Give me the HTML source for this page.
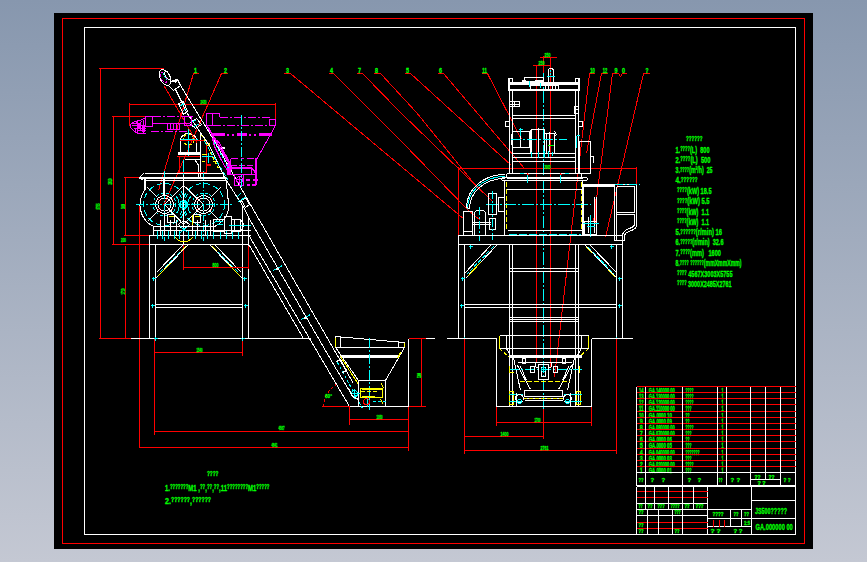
<!DOCTYPE html>
<html><head><meta charset="utf-8"><title>JS500 CAD drawing</title>
<style>
html,body{margin:0;padding:0;}
body{width:867px;height:562px;overflow:hidden;background:linear-gradient(to bottom,#8797ae 0%,#c4c8d3 100%);font-family:"Liberation Sans",sans-serif;}
#sheet{position:absolute;left:54px;top:13px;width:759px;height:536px;background:#000;}
svg{position:absolute;left:0;top:0;}
svg text{font-family:"Liberation Sans",sans-serif;font-weight:bold;stroke:#00ff00;stroke-width:0.3px;}
</style></head><body>
<div id="sheet"></div>
<svg width="867" height="562" viewBox="0 0 867 562" shape-rendering="crispEdges">
<g transform="translate(0.5,0.5)" stroke-linecap="butt">
<rect x="62" y="18" width="742" height="525" stroke="#ff0000" fill="none"/>
<rect x="84" y="27" width="711" height="507" stroke="#ffffff" fill="none"/>
<line x1="98" y1="68" x2="163" y2="68" stroke="#ff0000"/>
<line x1="100" y1="68" x2="100" y2="338" stroke="#ff0000"/>
<line x1="98" y1="338" x2="130" y2="338" stroke="#ff0000"/>
<line x1="111" y1="116" x2="145" y2="116" stroke="#ff0000"/>
<line x1="113" y1="116" x2="113" y2="244" stroke="#ff0000"/>
<line x1="111" y1="244" x2="149" y2="244" stroke="#ff0000"/>
<line x1="123" y1="177" x2="141" y2="177" stroke="#ff0000"/>
<line x1="125" y1="177" x2="125" y2="235" stroke="#ff0000"/>
<line x1="125" y1="245" x2="125" y2="338" stroke="#ff0000"/>
<line x1="123" y1="235" x2="149" y2="235" stroke="#ff0000"/>
<line x1="139" y1="204" x2="139" y2="447" stroke="#ff0000"/>
<line x1="129" y1="104" x2="275" y2="104" stroke="#ff0000"/>
<line x1="129" y1="102" x2="129" y2="125" stroke="#ff0000"/>
<line x1="275" y1="102" x2="275" y2="119" stroke="#ff0000"/>
<line x1="154" y1="338" x2="154" y2="434" stroke="#ff0000"/>
<line x1="242" y1="338" x2="242" y2="355" stroke="#ff0000"/>
<line x1="154" y1="352" x2="242" y2="352" stroke="#ff0000"/>
<line x1="154" y1="431" x2="408" y2="431" stroke="#ff0000"/>
<line x1="139" y1="447" x2="408" y2="447" stroke="#ff0000"/>
<line x1="408" y1="406" x2="408" y2="450" stroke="#ff0000"/>
<line x1="183" y1="238" x2="183" y2="269" stroke="#ff0000"/>
<line x1="183" y1="267" x2="248" y2="267" stroke="#ff0000"/>
<line x1="248" y1="245" x2="248" y2="269" stroke="#ff0000"/>
<line x1="193" y1="73" x2="198" y2="73" stroke="#ff0000"/>
<line x1="193" y1="73" x2="158" y2="190" stroke="#ff0000"/>
<line x1="221" y1="73" x2="227" y2="73" stroke="#ff0000"/>
<line x1="221" y1="73" x2="163" y2="205" stroke="#ff0000"/>
<line x1="130" y1="338" x2="310" y2="338" stroke="#ffffff"/>
<rect x="149" y="235" width="99" height="9" stroke="#ffffff" fill="none"/>
<line x1="149" y1="244" x2="149" y2="338" stroke="#ffffff"/>
<line x1="155" y1="244" x2="155" y2="338" stroke="#ffffff"/>
<line x1="242" y1="244" x2="242" y2="338" stroke="#ffffff"/>
<line x1="248" y1="244" x2="248" y2="338" stroke="#ffffff"/>
<line x1="155" y1="304" x2="242" y2="304" stroke="#ffffff"/>
<line x1="155" y1="307" x2="242" y2="307" stroke="#ffffff"/>
<line x1="182" y1="245" x2="156" y2="272" stroke="#ffffff"/>
<line x1="187" y1="245" x2="155" y2="278" stroke="#ffffff"/>
<line x1="184" y1="247" x2="158" y2="273" stroke="#00ffff" stroke-dasharray="4 2"/>
<line x1="170" y1="263" x2="157" y2="276" stroke="#ffff00"/>
<line x1="185" y1="246" x2="180" y2="251" stroke="#ffff00"/>
<line x1="210" y1="245" x2="242" y2="278" stroke="#ffffff"/>
<line x1="215" y1="245" x2="241" y2="272" stroke="#ffffff"/>
<line x1="213" y1="247" x2="239" y2="273" stroke="#00ffff" stroke-dasharray="4 2"/>
<line x1="227" y1="263" x2="240" y2="276" stroke="#ffff00"/>
<line x1="212" y1="246" x2="217" y2="251" stroke="#ffff00"/>
<line x1="151" y1="278" x2="155" y2="278" stroke="#00ffff"/>
<line x1="153" y1="276" x2="153" y2="280" stroke="#00ffff"/>
<line x1="242" y1="278" x2="246" y2="278" stroke="#00ffff"/>
<line x1="244" y1="276" x2="244" y2="280" stroke="#00ffff"/>
<line x1="150" y1="305" x2="154" y2="305" stroke="#00ffff"/>
<line x1="152" y1="303" x2="152" y2="307" stroke="#00ffff"/>
<line x1="243" y1="305" x2="247" y2="305" stroke="#00ffff"/>
<line x1="245" y1="303" x2="245" y2="307" stroke="#00ffff"/>
<line x1="153" y1="338" x2="157" y2="338" stroke="#00ffff"/>
<line x1="155" y1="336" x2="155" y2="340" stroke="#00ffff"/>
<line x1="240" y1="338" x2="244" y2="338" stroke="#00ffff"/>
<line x1="242" y1="336" x2="242" y2="340" stroke="#00ffff"/>
<line x1="144" y1="173" x2="224" y2="173" stroke="#ffffff"/>
<rect x="138.5" y="176.5" width="88" height="2" fill="#ffffff"/>
<line x1="144" y1="180" x2="226" y2="180" stroke="#ffffff"/>
<polyline points="143,173 139,177 143,180" stroke="#ffffff" fill="none"/>
<rect x="143.5" y="177.5" width="2" height="12" fill="#ffffff"/>
<path d="M144,189 L141,196 A24,24 0 0 0 153,226 L153,235" stroke="#ffffff" fill="none"/>
<path d="M226,180 L227,196 A24,24 0 0 1 214,226" stroke="#ffffff" fill="none"/>
<path d="M183,185 L164,204 M183,185 L203,204 M183,224 L164,204 M183,224 L203,204" stroke="#ffffff" fill="none"/>
<circle cx="164" cy="204" r="21" stroke="#00ffff" fill="none" stroke-dasharray="6 3"/>
<circle cx="164" cy="204" r="11.5" stroke="#00ffff" fill="none" stroke-dasharray="3 2"/>
<circle cx="164" cy="204" r="9" stroke="#ffffff" fill="none"/>
<circle cx="164" cy="204" r="6.5" stroke="#ffffff" fill="none"/>
<line x1="157" y1="197" x2="147" y2="187" stroke="#ffffff"/>
<line x1="171" y1="197" x2="181" y2="187" stroke="#ffffff"/>
<line x1="157" y1="211" x2="147" y2="221" stroke="#ffffff"/>
<line x1="171" y1="211" x2="181" y2="221" stroke="#ffffff"/>
<line x1="164" y1="170" x2="164" y2="240" stroke="#00ffff" stroke-dasharray="6 2 1 2"/>
<line x1="171" y1="209" x2="172" y2="209" stroke="#ff0000"/>
<line x1="157" y1="209" x2="158" y2="209" stroke="#ff0000"/>
<line x1="157" y1="199" x2="158" y2="199" stroke="#ff0000"/>
<line x1="171" y1="199" x2="172" y2="199" stroke="#ff0000"/>
<circle cx="203" cy="204" r="21" stroke="#00ffff" fill="none" stroke-dasharray="6 3"/>
<circle cx="203" cy="204" r="11.5" stroke="#00ffff" fill="none" stroke-dasharray="3 2"/>
<circle cx="203" cy="204" r="9" stroke="#ffffff" fill="none"/>
<circle cx="203" cy="204" r="6.5" stroke="#ffffff" fill="none"/>
<line x1="196" y1="197" x2="186" y2="187" stroke="#ffffff"/>
<line x1="210" y1="197" x2="220" y2="187" stroke="#ffffff"/>
<line x1="196" y1="211" x2="186" y2="221" stroke="#ffffff"/>
<line x1="210" y1="211" x2="220" y2="221" stroke="#ffffff"/>
<line x1="203" y1="170" x2="203" y2="240" stroke="#00ffff" stroke-dasharray="6 2 1 2"/>
<line x1="210" y1="209" x2="211" y2="209" stroke="#ff0000"/>
<line x1="196" y1="209" x2="197" y2="209" stroke="#ff0000"/>
<line x1="196" y1="199" x2="197" y2="199" stroke="#ff0000"/>
<line x1="210" y1="199" x2="211" y2="199" stroke="#ff0000"/>
<rect x="162.5" y="178.5" width="2" height="17" fill="#ffffff"/>
<line x1="164" y1="213" x2="164" y2="226" stroke="#ffffff"/>
<path d="M176,196 A14,14 0 0 1 176,213" stroke="#00ffff" fill="none"/>
<path d="M179,194 A17,17 0 0 1 179,215" stroke="#00ffff" fill="none" stroke-dasharray="4 2"/>
<path d="M190,196 A14,14 0 0 0 190,213" stroke="#00ffff" fill="none"/>
<path d="M187,194 A17,17 0 0 0 187,215" stroke="#00ffff" fill="none" stroke-dasharray="4 2"/>
<line x1="135" y1="204" x2="231" y2="204" stroke="#00ffff" stroke-dasharray="8 2 2 2"/>
<line x1="183" y1="170" x2="183" y2="244" stroke="#ffffff"/>
<rect x="180" y="201" width="6" height="6" stroke="#00ffff" fill="none"/>
<line x1="153" y1="226" x2="214" y2="226" stroke="#ffffff"/>
<line x1="153" y1="230" x2="250" y2="230" stroke="#ffffff"/>
<line x1="150" y1="235" x2="250" y2="235" stroke="#ffffff"/>
<line x1="160" y1="219" x2="160" y2="235" stroke="#ffffff"/>
<line x1="164" y1="219" x2="164" y2="235" stroke="#ffffff"/>
<line x1="170" y1="219" x2="170" y2="235" stroke="#ffffff"/>
<line x1="176" y1="219" x2="176" y2="235" stroke="#ffffff"/>
<line x1="192" y1="219" x2="192" y2="235" stroke="#ffffff"/>
<line x1="197" y1="219" x2="197" y2="235" stroke="#ffffff"/>
<line x1="205" y1="219" x2="205" y2="235" stroke="#ffffff"/>
<line x1="210" y1="219" x2="210" y2="235" stroke="#ffffff"/>
<line x1="157" y1="230" x2="157" y2="238" stroke="#00ffff"/>
<line x1="162" y1="230" x2="162" y2="238" stroke="#00ffff"/>
<line x1="168" y1="230" x2="168" y2="238" stroke="#00ffff"/>
<line x1="174" y1="230" x2="174" y2="238" stroke="#00ffff"/>
<line x1="179" y1="230" x2="179" y2="238" stroke="#00ffff"/>
<line x1="188" y1="230" x2="188" y2="238" stroke="#00ffff"/>
<line x1="195" y1="230" x2="195" y2="238" stroke="#00ffff"/>
<line x1="201" y1="230" x2="201" y2="238" stroke="#00ffff"/>
<line x1="207" y1="230" x2="207" y2="238" stroke="#00ffff"/>
<line x1="213" y1="230" x2="213" y2="238" stroke="#00ffff"/>
<line x1="220" y1="230" x2="220" y2="238" stroke="#00ffff"/>
<line x1="226" y1="230" x2="226" y2="238" stroke="#00ffff"/>
<line x1="232" y1="230" x2="232" y2="238" stroke="#00ffff"/>
<line x1="238" y1="230" x2="238" y2="238" stroke="#00ffff"/>
<rect x="167" y="214" width="7" height="8" stroke="#ffffff" fill="none"/>
<rect x="193" y="214" width="7" height="8" stroke="#ffffff" fill="none"/>
<line x1="168" y1="216" x2="173" y2="216" stroke="#ffff00"/>
<line x1="194" y1="216" x2="199" y2="216" stroke="#ffff00"/>
<line x1="192" y1="214" x2="192" y2="224" stroke="#ffff00"/>
<path d="M178,224 Q183,218 189,224 Q183,232 178,224" stroke="#ffffff" fill="none"/>
<line x1="180" y1="226" x2="187" y2="232" stroke="#00ffff"/>
<line x1="187" y1="226" x2="180" y2="232" stroke="#00ffff"/>
<path d="M175,237 Q183,246 192,237" stroke="#ffff00" fill="none"/>
<rect x="213" y="219" width="11" height="12" stroke="#ffffff" fill="none"/>
<rect x="224" y="216" width="7" height="17" stroke="#ffffff" fill="none"/>
<rect x="231" y="219" width="9" height="12" stroke="#ffffff" fill="none"/>
<path d="M240,219 Q246,225 240,231" stroke="#ffffff" fill="none"/>
<line x1="234" y1="219" x2="234" y2="231" stroke="#ffffff"/>
<line x1="228" y1="225" x2="250" y2="225" stroke="#00ffff"/>
<line x1="215" y1="221" x2="222" y2="221" stroke="#00ffff"/>
<line x1="216" y1="224" x2="222" y2="224" stroke="#00ffff"/>
<path d="M180,152 L180,140 A8,7 0 0 1 196,140 L196,152" stroke="#ffffff" fill="none"/>
<circle cx="188" cy="139" r="5.5" stroke="#ffff00" fill="none" stroke-dasharray="3 2"/>
<line x1="188" y1="128" x2="188" y2="156" stroke="#00ffff"/>
<line x1="180" y1="139" x2="197" y2="139" stroke="#00ffff"/>
<rect x="177.5" y="151.5" width="23" height="3" fill="#ffffff"/>
<line x1="200" y1="132" x2="200" y2="178" stroke="#ffffff"/>
<line x1="184" y1="159" x2="200" y2="159" stroke="#ffffff"/>
<line x1="194" y1="159" x2="199" y2="166" stroke="#ffffff"/>
<line x1="198" y1="164" x2="198" y2="178" stroke="#ffffff"/>
<line x1="183" y1="159" x2="183" y2="174" stroke="#00ffff"/>
<line x1="179" y1="140" x2="206" y2="140" stroke="#ff0000"/>
<line x1="206" y1="140" x2="206" y2="172" stroke="#ff0000"/>
<line x1="179" y1="172" x2="206" y2="172" stroke="#ff0000"/>
<line x1="179" y1="156" x2="179" y2="172" stroke="#ff0000"/>
<line x1="176" y1="156" x2="199" y2="156" stroke="#ff0000"/>
<rect x="206.5" y="163.5" width="4" height="2" fill="#ff0000"/>
<polyline points="201,134 206,143 210,152 214,160 218,168" stroke="#ffff00" fill="none" stroke-dasharray="3 2"/>
<line x1="201" y1="154" x2="206" y2="154" stroke="#ffff00"/>
<line x1="201" y1="161" x2="204" y2="161" stroke="#ffff00"/>
<line x1="212" y1="161" x2="216" y2="161" stroke="#ffff00"/>
<rect x="207.5" y="142.5" width="2" height="3" fill="#ffff00"/>
<line x1="208" y1="152" x2="208" y2="162" stroke="#00ffff"/>
<line x1="201" y1="156" x2="212" y2="156" stroke="#00ffff"/>
<rect x="217.5" y="146.5" width="7" height="2" fill="#ffffff"/>
<ellipse cx="164.5" cy="77" rx="5" ry="8.5" transform="rotate(-27 164.5 77)" stroke="#fff" fill="none"/>
<ellipse cx="163" cy="77" rx="2.5" ry="6" transform="rotate(-27 163 77)" stroke="#f0f" fill="none" stroke-dasharray="3 2"/>
<ellipse cx="167" cy="75" rx="2" ry="4.5" transform="rotate(-27 167 75)" stroke="#fff" fill="none"/>
<line x1="163" y1="73" x2="166" y2="80" stroke="#00ffff" stroke-dasharray="2 1"/>
<polyline points="169,83 172,80 177,79 180,85 173,90 169,86" stroke="#ffffff" fill="none"/>
<polyline points="172,80 175,81 177,79" stroke="#ffffff" fill="none" stroke-width="2"/>
<line x1="164" y1="86" x2="197" y2="143" stroke="#ff0000"/>
<polyline points="180,85 213,139 239,185" stroke="#ffffff" fill="none"/>
<polyline points="175,89 182,103 186,112 200,132 209,145 224,177" stroke="#ffffff" fill="none"/>
<polygon points="178,103 183,101 187,111 183,114" stroke="#ffffff" fill="none"/>
<polygon points="189,123 196,118 201,124 195,128" stroke="#ffffff" fill="none"/>
<line x1="180" y1="105" x2="184" y2="103" stroke="#00ffff"/>
<line x1="183" y1="110" x2="186" y2="108" stroke="#00ffff"/>
<line x1="191" y1="122" x2="196" y2="119" stroke="#00ffff"/>
<line x1="194" y1="126" x2="199" y2="123" stroke="#00ffff"/>
<line x1="204" y1="141" x2="228" y2="180" stroke="#00ffff" stroke-dasharray="4 2"/>
<line x1="239" y1="185" x2="353" y2="383" stroke="#ffffff"/>
<polyline points="224,177 242,205 252,224 259,236 336,369 350,392" stroke="#ffffff" fill="none"/>
<line x1="249" y1="236" x2="349" y2="406" stroke="#ffffff"/>
<line x1="249" y1="245" x2="303" y2="338" stroke="#ffffff"/>
<line x1="242" y1="205" x2="242" y2="338" stroke="#ffffff"/>
<line x1="248" y1="216" x2="248" y2="338" stroke="#ffffff"/>
<polygon points="241,200 245,197 249,204 245,207" stroke="#ffffff" fill="none"/>
<line x1="236" y1="197" x2="240" y2="193" stroke="#00ffff"/>
<line x1="238" y1="201" x2="246" y2="196" stroke="#00ffff"/>
<line x1="248" y1="245" x2="248" y2="268" stroke="#ff0000"/>
<line x1="230" y1="267" x2="248" y2="267" stroke="#ff0000"/>
<line x1="273" y1="270" x2="282" y2="265" stroke="#00ffff"/>
<line x1="275" y1="268" x2="278" y2="268" stroke="#ffffff" stroke-width="2"/>
<line x1="301" y1="319" x2="310" y2="314" stroke="#00ffff"/>
<line x1="303" y1="317" x2="306" y2="317" stroke="#ffffff" stroke-width="2"/>
<line x1="152" y1="116" x2="193" y2="116" stroke="#ff00ff" stroke-dasharray="8 2 2 2"/>
<line x1="219" y1="117" x2="269" y2="117" stroke="#ff00ff" stroke-dasharray="8 2 2 2"/>
<rect x="145" y="116" width="7" height="10" stroke="#ff00ff" fill="none"/>
<line x1="152" y1="123" x2="189" y2="123" stroke="#ff00ff"/>
<line x1="150" y1="131" x2="188" y2="131" stroke="#ff00ff" stroke-dasharray="8 2 2 2"/>
<rect x="184" y="116" width="7" height="9" stroke="#ff00ff" fill="none"/>
<line x1="167" y1="123" x2="167" y2="129" stroke="#ff00ff"/>
<line x1="170" y1="123" x2="170" y2="129" stroke="#ff00ff"/>
<line x1="173" y1="123" x2="173" y2="129" stroke="#ff00ff"/>
<line x1="176" y1="123" x2="176" y2="129" stroke="#ff00ff"/>
<line x1="179" y1="123" x2="179" y2="129" stroke="#ff00ff"/>
<line x1="167" y1="129" x2="179" y2="129" stroke="#ff00ff"/>
<path d="M145,117 L140,120 L134,121 L130,124 L130,127 L133,130 L137,133 L145,133 M131,125 L144,125 M133,128 L145,128 M135,121 L141,131 M141,121 L134,131 M137,120 L137,133 M143,119 L143,133 M132,123 L139,123 M136,130 L145,130" stroke="#ff00ff" fill="none"/>
<rect x="137.5" y="122.5" width="3" height="5" fill="#ff00ff"/>
<rect x="141.5" y="125.5" width="3" height="6" fill="#ff00ff"/>
<rect x="206" y="113" width="6" height="12" stroke="#ff00ff" fill="none"/>
<line x1="206" y1="113" x2="219" y2="113" stroke="#ff00ff"/>
<line x1="219" y1="113" x2="219" y2="116" stroke="#ff00ff"/>
<line x1="212" y1="125" x2="269" y2="125" stroke="#ff00ff" stroke-dasharray="8 2 2 2"/>
<rect x="269" y="119" width="6" height="6" stroke="#ff00ff" fill="none"/>
<line x1="210" y1="134" x2="224" y2="134" stroke="#ff00ff" stroke-width="3"/>
<line x1="226" y1="134" x2="234" y2="134" stroke="#ff00ff" stroke-width="2" stroke-dasharray="2 3"/>
<line x1="236" y1="134" x2="246" y2="134" stroke="#ff00ff" stroke-width="3"/>
<line x1="248" y1="134" x2="256" y2="134" stroke="#ff00ff" stroke-width="2" stroke-dasharray="2 3"/>
<line x1="258" y1="134" x2="271" y2="134" stroke="#ff00ff" stroke-width="3"/>
<line x1="275" y1="125" x2="256" y2="159" stroke="#ff00ff"/>
<line x1="206" y1="125" x2="230" y2="166" stroke="#ff00ff"/>
<line x1="208" y1="127" x2="232" y2="168" stroke="#ff00ff"/>
<line x1="230" y1="158" x2="256" y2="158" stroke="#ff00ff" stroke-dasharray="7 3 3 3"/>
<line x1="230" y1="158" x2="230" y2="174" stroke="#ff00ff"/>
<rect x="254.5" y="157.5" width="2" height="27" fill="#ff00ff"/>
<line x1="230" y1="165" x2="255" y2="165" stroke="#ff00ff" stroke-dasharray="6 2"/>
<rect x="230.5" y="166.5" width="21" height="2" fill="#ff00ff"/>
<line x1="251" y1="168" x2="251" y2="174" stroke="#ff00ff"/>
<line x1="230" y1="174" x2="256" y2="174" stroke="#ff00ff"/>
<path d="M251,168 Q254,169 254,172" stroke="#ff00ff" fill="none"/>
<rect x="226.5" y="163.5" width="4" height="11" fill="#ff00ff"/>
<rect x="234" y="174" width="9" height="11" stroke="#ff00ff" fill="none"/>
<circle cx="239" cy="179" r="3" stroke="#ff00ff" fill="none"/>
<line x1="235" y1="179" x2="243" y2="179" stroke="#ff00ff"/>
<line x1="239" y1="175" x2="239" y2="184" stroke="#ff00ff"/>
<line x1="245" y1="179" x2="249" y2="179" stroke="#ff00ff" stroke-width="2"/>
<line x1="252" y1="179" x2="257" y2="179" stroke="#ff00ff" stroke-width="2"/>
<line x1="246" y1="184" x2="249" y2="184" stroke="#ff00ff" stroke-width="2"/>
<line x1="251" y1="184" x2="255" y2="184" stroke="#ff00ff" stroke-width="2"/>
<line x1="241" y1="114" x2="241" y2="186" stroke="#00ffff" stroke-dasharray="10 2 2 2"/>
<polygon points="212,138 218,141 226,156 232,168 228,172 220,158 214,146" stroke="#ff00ff" fill="none"/>
<line x1="214" y1="142" x2="228" y2="168" stroke="#00ffff" stroke-dasharray="2 2"/>
<line x1="349" y1="406" x2="408" y2="406" stroke="#ffffff"/>
<line x1="408" y1="338" x2="408" y2="406" stroke="#ffffff"/>
<line x1="408" y1="338" x2="434" y2="338" stroke="#ffffff"/>
<line x1="446" y1="338" x2="452" y2="338" stroke="#ffffff"/>
<polygon points="335,336 404,342 404,347 335,347" stroke="#ffffff" fill="none"/>
<line x1="340" y1="336" x2="340" y2="347" stroke="#ffffff"/>
<line x1="398" y1="341" x2="398" y2="347" stroke="#ffffff"/>
<line x1="335" y1="337" x2="335" y2="347" stroke="#ffff00"/>
<line x1="404" y1="342" x2="404" y2="347" stroke="#ffff00"/>
<rect x="340" y="355" width="58" height="2" stroke="#ffffff" fill="#ffffff"/>
<line x1="335" y1="347" x2="358" y2="380" stroke="#ffffff"/>
<line x1="404" y1="347" x2="385" y2="380" stroke="#ffffff"/>
<line x1="340" y1="356" x2="358" y2="384" stroke="#ffff00"/>
<line x1="400" y1="352" x2="397" y2="358" stroke="#ffff00"/>
<rect x="358" y="380" width="27" height="26" stroke="#ffffff" fill="none"/>
<line x1="369" y1="337" x2="369" y2="409" stroke="#00ffff" stroke-dasharray="10 2 2 2"/>
<rect x="360" y="388" width="22" height="9" stroke="#ffff00" fill="none"/>
<line x1="361" y1="389" x2="381" y2="389" stroke="#ffff00"/>
<line x1="361" y1="396" x2="374" y2="396" stroke="#ffff00"/>
<line x1="360" y1="391" x2="378" y2="391" stroke="#ffff00" stroke-dasharray="4 2"/>
<line x1="381" y1="383" x2="383" y2="388" stroke="#ffff00"/>
<line x1="380" y1="399" x2="383" y2="404" stroke="#ffff00"/>
<line x1="372" y1="401" x2="386" y2="401" stroke="#00ffff" stroke-dasharray="3 2"/>
<line x1="367" y1="396" x2="367" y2="406" stroke="#00ffff"/>
<circle cx="366" cy="401" r="3" stroke="#ff0000" fill="none"/>
<line x1="337" y1="362" x2="362" y2="408" stroke="#00ffff" stroke-dasharray="3 2"/>
<circle cx="354" cy="393" r="3" stroke="#00ffff" fill="none"/>
<line x1="349" y1="393" x2="359" y2="393" stroke="#00ffff"/>
<line x1="354" y1="388" x2="354" y2="398" stroke="#00ffff"/>
<polyline points="336,361 340,359 346,370 342,372" stroke="#ffffff" fill="none"/>
<polyline points="348,388 352,396 358,399" stroke="#ffffff" fill="none"/>
<line x1="321" y1="406" x2="349" y2="406" stroke="#ff0000"/>
<line x1="408" y1="406" x2="425" y2="406" stroke="#ff0000"/>
<line x1="408" y1="338" x2="425" y2="338" stroke="#ff0000"/>
<line x1="421" y1="338" x2="421" y2="406" stroke="#ff0000"/>
<path d="M323,406 A26,26 0 0 1 336,384" stroke="#ff0000" fill="none" stroke-dasharray="3 2"/>
<line x1="349" y1="406" x2="349" y2="424" stroke="#ff0000"/>
<line x1="349" y1="419" x2="408" y2="419" stroke="#ff0000"/>
<line x1="283" y1="73" x2="290" y2="73" stroke="#ff0000"/>
<line x1="290" y1="73" x2="464" y2="219" stroke="#ff0000"/>
<line x1="328" y1="73" x2="333" y2="73" stroke="#ff0000"/>
<polyline points="333,73 372,112 400,140 468,210 480,220" stroke="#ff0000" fill="none"/>
<line x1="356" y1="73" x2="362" y2="73" stroke="#ff0000"/>
<polyline points="362,73 400,112 492,201" stroke="#ff0000" fill="none"/>
<line x1="373" y1="73" x2="380" y2="73" stroke="#ff0000"/>
<polyline points="380,73 416,112 476,186" stroke="#ff0000" fill="none"/>
<line x1="404" y1="73" x2="410" y2="73" stroke="#ff0000"/>
<line x1="410" y1="73" x2="511" y2="165" stroke="#ff0000"/>
<line x1="437" y1="73" x2="443" y2="73" stroke="#ff0000"/>
<line x1="443" y1="73" x2="524" y2="168" stroke="#ff0000"/>
<line x1="481" y1="73" x2="487" y2="73" stroke="#ff0000"/>
<line x1="487" y1="73" x2="521" y2="139" stroke="#ff0000"/>
<line x1="589" y1="73" x2="594" y2="73" stroke="#ff0000"/>
<line x1="589" y1="73" x2="554" y2="377" stroke="#ff0000"/>
<line x1="601" y1="73" x2="607" y2="73" stroke="#ff0000"/>
<line x1="601" y1="73" x2="586" y2="153" stroke="#ff0000"/>
<polyline points="612,73 618,73 620,76 622,73 626,73" stroke="#ff0000" fill="none"/>
<line x1="612" y1="73" x2="593" y2="222" stroke="#ff0000"/>
<line x1="643" y1="73" x2="649" y2="73" stroke="#ff0000"/>
<line x1="643" y1="73" x2="605" y2="237" stroke="#ff0000"/>
<line x1="536" y1="64" x2="536" y2="362" stroke="#ff0000"/>
<line x1="550" y1="56" x2="550" y2="367" stroke="#ff0000"/>
<line x1="543" y1="55" x2="543" y2="72" stroke="#ff0000"/>
<line x1="539" y1="57" x2="556" y2="57" stroke="#ff0000"/>
<line x1="532" y1="65" x2="549" y2="65" stroke="#ff0000"/>
<line x1="458" y1="168" x2="636" y2="168" stroke="#ff0000"/>
<line x1="458" y1="166" x2="458" y2="235" stroke="#ff0000"/>
<line x1="636" y1="166" x2="636" y2="183" stroke="#ff0000"/>
<line x1="543" y1="72" x2="543" y2="410" stroke="#00ffff" stroke-dasharray="12 2 2 2"/>
<line x1="509" y1="78" x2="509" y2="172" stroke="#ffffff"/>
<line x1="512" y1="90" x2="512" y2="172" stroke="#ffffff"/>
<line x1="575" y1="90" x2="575" y2="172" stroke="#ffffff"/>
<line x1="578" y1="78" x2="578" y2="172" stroke="#ffffff"/>
<rect x="508" y="78" width="4" height="4" stroke="#ffffff" fill="none"/>
<rect x="575" y="78" width="4" height="4" stroke="#ffffff" fill="none"/>
<rect x="508" y="82" width="71" height="2" stroke="#ffffff" fill="#ffffff"/>
<line x1="508" y1="82" x2="508" y2="90" stroke="#ffffff"/>
<line x1="579" y1="82" x2="579" y2="90" stroke="#ffffff"/>
<line x1="508" y1="89" x2="579" y2="89" stroke="#ffffff" stroke-width="2"/>
<polyline points="521,82 524,80 524,77 543,77 543,82" stroke="#ffffff" fill="none"/>
<rect x="522" y="80" width="21" height="2" stroke="#ffffff" fill="#ffffff"/>
<rect x="526" y="78" width="8" height="2" stroke="#000" fill="#000"/>
<path d="M548,82 L548,70 Q548,68 550,68 Q553,68 553,70 L553,82" stroke="#ffffff" fill="none"/>
<rect x="530" y="85" width="28" height="5" stroke="#ffffff" fill="none"/>
<line x1="545" y1="85" x2="545" y2="90" stroke="#ffffff"/>
<line x1="548" y1="85" x2="548" y2="90" stroke="#ffffff"/>
<line x1="552" y1="85" x2="552" y2="90" stroke="#ffffff"/>
<line x1="555" y1="85" x2="555" y2="90" stroke="#ffffff"/>
<line x1="529" y1="80" x2="529" y2="86" stroke="#00ffff"/>
<line x1="540" y1="82" x2="540" y2="87" stroke="#00ffff"/>
<line x1="546" y1="76" x2="554" y2="76" stroke="#00ffff"/>
<line x1="550" y1="69" x2="550" y2="75" stroke="#00ffff" stroke-dasharray="2 1"/>
<rect x="509" y="101" width="10" height="5" stroke="#ffffff" fill="none"/>
<line x1="509" y1="104" x2="519" y2="104" stroke="#ffffff"/>
<line x1="514" y1="101" x2="514" y2="106" stroke="#ffffff"/>
<rect x="574" y="106" width="4" height="7" stroke="#ffffff" fill="none"/>
<line x1="574" y1="109" x2="578" y2="109" stroke="#ffffff"/>
<line x1="512" y1="115" x2="575" y2="115" stroke="#ffffff"/>
<line x1="512" y1="118" x2="575" y2="118" stroke="#ffffff"/>
<rect x="505" y="121" width="4" height="5" stroke="#ffffff" fill="none"/>
<rect x="578" y="121" width="4" height="5" stroke="#ffffff" fill="none"/>
<line x1="512" y1="153" x2="575" y2="153" stroke="#ffffff"/>
<line x1="512" y1="157" x2="575" y2="157" stroke="#ffffff"/>
<line x1="512" y1="161" x2="575" y2="161" stroke="#ffffff"/>
<path d="M513,131 L529,131 L529,147 L513,147 Q511,145 511,139 Q511,133 513,131" stroke="#ffffff" fill="none"/>
<line x1="520" y1="131" x2="520" y2="147" stroke="#ffffff"/>
<rect x="531" y="129" width="13" height="24" stroke="#ffffff" fill="none"/>
<line x1="530" y1="129" x2="530" y2="153" stroke="#ffffff"/>
<line x1="544" y1="133" x2="554" y2="133" stroke="#ffffff"/>
<line x1="554" y1="133" x2="554" y2="153" stroke="#ffffff"/>
<line x1="538" y1="127" x2="538" y2="153" stroke="#ffffff"/>
<line x1="549" y1="131" x2="549" y2="151" stroke="#ffffff"/>
<line x1="546" y1="133" x2="546" y2="153" stroke="#ffffff"/>
<line x1="510" y1="139" x2="566" y2="139" stroke="#00ffff" stroke-dasharray="10 2 2 2"/>
<line x1="520" y1="127" x2="520" y2="135" stroke="#00ffff"/>
<line x1="518" y1="129" x2="522" y2="129" stroke="#00ffff"/>
<line x1="531" y1="151" x2="531" y2="156" stroke="#00ffff"/>
<line x1="538" y1="151" x2="538" y2="157" stroke="#00ffff"/>
<line x1="544" y1="150" x2="544" y2="157" stroke="#00ffff"/>
<line x1="548" y1="150" x2="548" y2="156" stroke="#00ffff"/>
<line x1="552" y1="151" x2="552" y2="155" stroke="#00ffff"/>
<polyline points="554,131 556,134 554,136" stroke="#ffffff" fill="none"/>
<line x1="547" y1="145" x2="553" y2="145" stroke="#00ff00"/>
<rect x="579" y="141" width="11" height="32" stroke="#ffffff" fill="none"/>
<line x1="590" y1="156" x2="593" y2="156" stroke="#ffffff"/>
<line x1="593" y1="156" x2="593" y2="162" stroke="#ffffff"/>
<line x1="576" y1="135" x2="576" y2="147" stroke="#00ffff"/>
<line x1="576" y1="135" x2="579" y2="135" stroke="#00ffff"/>
<path d="M507,173 L580,173 L581,174 L581,177 L586,177 Q588,179 586,180 L502,180 Q500,179 502,177 L506,177 L506,174 Z" stroke="#ffffff" fill="none"/>
<line x1="502" y1="177" x2="586" y2="177" stroke="#ffffff"/>
<line x1="506" y1="178" x2="582" y2="178" stroke="#ffffff"/>
<line x1="504" y1="180" x2="504" y2="235" stroke="#ffffff"/>
<line x1="582" y1="180" x2="582" y2="235" stroke="#ffffff"/>
<line x1="506" y1="181" x2="506" y2="230" stroke="#ffff00" stroke-dasharray="5 2"/>
<line x1="581" y1="181" x2="581" y2="230" stroke="#ffff00" stroke-dasharray="5 2"/>
<line x1="506" y1="189" x2="581" y2="189" stroke="#ffffff"/>
<line x1="507" y1="230" x2="581" y2="230" stroke="#ffffff"/>
<line x1="508" y1="234" x2="580" y2="234" stroke="#00ffff" stroke-dasharray="8 2"/>
<line x1="485" y1="204" x2="590" y2="204" stroke="#00ffff" stroke-dasharray="12 2 2 2"/>
<line x1="527" y1="174" x2="527" y2="182" stroke="#00ffff"/>
<line x1="527" y1="173" x2="528" y2="175" stroke="#ff0000"/>
<line x1="560" y1="174" x2="560" y2="182" stroke="#00ffff"/>
<line x1="560" y1="173" x2="561" y2="175" stroke="#ff0000"/>
<line x1="519" y1="173" x2="523" y2="173" stroke="#00ffff"/>
<line x1="564" y1="173" x2="568" y2="173" stroke="#00ffff"/>
<path d="M466,207 A38,33 0 0 1 504,174" stroke="#ffffff" fill="none"/>
<path d="M467,208 A37,32 0 0 1 504,176" stroke="#00ffff" fill="none"/>
<path d="M469,208 A35,30 0 0 1 504,178" stroke="#ffffff" fill="none"/>
<line x1="466" y1="207" x2="469" y2="208" stroke="#ffffff"/>
<rect x="463" y="211" width="9" height="24" stroke="#ffffff" fill="none"/>
<line x1="463" y1="231" x2="472" y2="231" stroke="#ffffff"/>
<path d="M474,235 L474,213 Q474,210 477,210 L482,210 Q485,210 485,213 L485,235" stroke="#ffffff" fill="none"/>
<line x1="472" y1="222" x2="490" y2="222" stroke="#ffffff"/>
<line x1="472" y1="224" x2="490" y2="224" stroke="#ffffff"/>
<line x1="479" y1="206" x2="479" y2="240" stroke="#00ffff" stroke-dasharray="8 2 2 2"/>
<rect x="488" y="193" width="8" height="21" stroke="#ffffff" fill="none"/>
<rect x="489" y="218" width="6" height="11" stroke="#ffffff" fill="none"/>
<line x1="492" y1="190" x2="492" y2="239" stroke="#00ffff" stroke-dasharray="8 2 2 2"/>
<rect x="498" y="197" width="6" height="14" stroke="#ffffff" fill="none"/>
<rect x="583" y="184" width="31" height="2" stroke="#ffffff" fill="#ffffff"/>
<line x1="583" y1="185" x2="583" y2="234" stroke="#ffffff"/>
<line x1="594" y1="196" x2="594" y2="232" stroke="#ffffff"/>
<line x1="596" y1="196" x2="596" y2="232" stroke="#ffffff"/>
<line x1="595" y1="198" x2="595" y2="222" stroke="#ff0000"/>
<rect x="584" y="221" width="12" height="13" stroke="#ffffff" fill="none"/>
<line x1="588" y1="216" x2="588" y2="232" stroke="#ffffff"/>
<line x1="590" y1="214" x2="590" y2="236" stroke="#00ffff"/>
<line x1="582" y1="223" x2="598" y2="223" stroke="#00ffff"/>
<line x1="586" y1="226" x2="594" y2="226" stroke="#00ffff"/>
<path d="M614,184 L636,184 L636,225 Q636,228 631,230 Q624,232 624,236 L624,240 L614,240 Z" stroke="#ffffff" fill="none"/>
<path d="M616,186 L634,186 L634,212 L616,212 M616,214 L634,214 L634,224 Q633,227 629,228 Q622,230 622,236 L622,240" stroke="#ffffff" fill="none"/>
<line x1="616" y1="186" x2="616" y2="240" stroke="#ffffff"/>
<line x1="614" y1="184" x2="639" y2="184" stroke="#00ffff" stroke-dasharray="8 2 2 2"/>
<rect x="458" y="235" width="164" height="9" stroke="#ffffff" fill="none"/>
<line x1="458" y1="244" x2="458" y2="338" stroke="#ffffff"/>
<line x1="464" y1="244" x2="464" y2="338" stroke="#ffffff"/>
<line x1="616" y1="244" x2="616" y2="338" stroke="#ffffff"/>
<line x1="622" y1="244" x2="622" y2="338" stroke="#ffffff"/>
<line x1="509" y1="244" x2="509" y2="406" stroke="#ffffff"/>
<line x1="512" y1="244" x2="512" y2="406" stroke="#ffffff"/>
<line x1="575" y1="244" x2="575" y2="406" stroke="#ffffff"/>
<line x1="578" y1="244" x2="578" y2="406" stroke="#ffffff"/>
<line x1="509" y1="268" x2="578" y2="268" stroke="#ffffff"/>
<line x1="509" y1="271" x2="578" y2="271" stroke="#ffffff"/>
<line x1="464" y1="304" x2="616" y2="304" stroke="#ffffff"/>
<line x1="464" y1="307" x2="616" y2="307" stroke="#ffffff"/>
<line x1="509" y1="317" x2="578" y2="317" stroke="#ffffff"/>
<line x1="509" y1="319" x2="578" y2="319" stroke="#ffffff"/>
<line x1="509" y1="321" x2="578" y2="321" stroke="#ffffff"/>
<line x1="490" y1="245" x2="464" y2="273" stroke="#ffffff"/>
<line x1="496" y1="245" x2="465" y2="278" stroke="#ffffff"/>
<line x1="493" y1="246" x2="466" y2="274" stroke="#00ffff" stroke-dasharray="4 2"/>
<line x1="480" y1="262" x2="467" y2="276" stroke="#ffff00"/>
<line x1="585" y1="245" x2="617" y2="278" stroke="#ffffff"/>
<line x1="590" y1="245" x2="616" y2="272" stroke="#ffffff"/>
<line x1="588" y1="247" x2="614" y2="274" stroke="#00ffff" stroke-dasharray="4 2"/>
<line x1="586" y1="247" x2="592" y2="253" stroke="#ffff00"/>
<line x1="608" y1="270" x2="615" y2="277" stroke="#ffff00"/>
<line x1="460" y1="278" x2="464" y2="278" stroke="#00ffff"/>
<line x1="462" y1="276" x2="462" y2="280" stroke="#00ffff"/>
<line x1="617" y1="278" x2="621" y2="278" stroke="#00ffff"/>
<line x1="619" y1="276" x2="619" y2="280" stroke="#00ffff"/>
<line x1="459" y1="305" x2="463" y2="305" stroke="#00ffff"/>
<line x1="461" y1="303" x2="461" y2="307" stroke="#00ffff"/>
<line x1="617" y1="305" x2="621" y2="305" stroke="#00ffff"/>
<line x1="619" y1="303" x2="619" y2="307" stroke="#00ffff"/>
<line x1="462" y1="338" x2="466" y2="338" stroke="#00ffff"/>
<line x1="464" y1="336" x2="464" y2="340" stroke="#00ffff"/>
<line x1="614" y1="338" x2="618" y2="338" stroke="#00ffff"/>
<line x1="616" y1="336" x2="616" y2="340" stroke="#00ffff"/>
<line x1="468" y1="246" x2="472" y2="246" stroke="#00ffff"/>
<line x1="470" y1="244" x2="470" y2="248" stroke="#00ffff"/>
<line x1="609" y1="246" x2="613" y2="246" stroke="#00ffff"/>
<line x1="611" y1="244" x2="611" y2="248" stroke="#00ffff"/>
<line x1="446" y1="338" x2="496" y2="338" stroke="#ffffff"/>
<line x1="591" y1="338" x2="632" y2="338" stroke="#ffffff"/>
<line x1="496" y1="338" x2="496" y2="406" stroke="#ffffff"/>
<line x1="591" y1="338" x2="591" y2="406" stroke="#ffffff"/>
<line x1="496" y1="406" x2="591" y2="406" stroke="#ffffff"/>
<line x1="499" y1="335" x2="588" y2="335" stroke="#ffffff"/>
<line x1="499" y1="335" x2="499" y2="348" stroke="#ffff00"/>
<line x1="588" y1="335" x2="588" y2="348" stroke="#ffff00"/>
<line x1="506" y1="335" x2="506" y2="348" stroke="#ffffff"/>
<line x1="581" y1="335" x2="581" y2="348" stroke="#ffffff"/>
<line x1="499" y1="348" x2="588" y2="348" stroke="#ffffff"/>
<line x1="499" y1="348" x2="509" y2="357" stroke="#ffff00" stroke-dasharray="4 2"/>
<line x1="588" y1="348" x2="578" y2="357" stroke="#ffff00" stroke-dasharray="4 2"/>
<line x1="506" y1="348" x2="510" y2="355" stroke="#ffffff"/>
<line x1="581" y1="348" x2="577" y2="355" stroke="#ffffff"/>
<line x1="509" y1="355" x2="581" y2="355" stroke="#ffffff" stroke-width="2"/>
<line x1="509" y1="357" x2="581" y2="357" stroke="#ffffff"/>
<line x1="513" y1="357" x2="520" y2="390" stroke="#ffffff"/>
<line x1="574" y1="357" x2="567" y2="390" stroke="#ffffff"/>
<line x1="517" y1="362" x2="571" y2="362" stroke="#ffffff"/>
<line x1="517" y1="365" x2="530" y2="389" stroke="#ffffff"/>
<line x1="571" y1="365" x2="558" y2="389" stroke="#ffffff"/>
<line x1="520" y1="366" x2="526" y2="380" stroke="#ffffff"/>
<line x1="568" y1="366" x2="562" y2="380" stroke="#ffffff"/>
<line x1="508" y1="369" x2="581" y2="369" stroke="#00ffff" stroke-dasharray="10 2 2 2"/>
<line x1="519" y1="381" x2="569" y2="381" stroke="#ffff00" stroke-dasharray="5 2"/>
<rect x="538" y="364" width="10" height="15" stroke="#ffffff" fill="none"/>
<rect x="541" y="367" width="4" height="9" stroke="#ffffff" fill="none"/>
<polyline points="538,368 535,366 535,362" stroke="#ffffff" fill="none"/>
<polyline points="548,368 551,366 551,362" stroke="#ffffff" fill="none"/>
<circle cx="543" cy="369" r="2" stroke="#00ffff" fill="none"/>
<rect x="522" y="358" width="3" height="5" stroke="#ffffff" fill="none"/>
<rect x="562" y="358" width="3" height="5" stroke="#ffffff" fill="none"/>
<rect x="530" y="366" width="4" height="6" stroke="#ffffff" fill="none"/>
<rect x="553" y="366" width="4" height="6" stroke="#ffffff" fill="none"/>
<rect x="524" y="390" width="38" height="6" stroke="#ffffff" fill="none"/>
<line x1="524" y1="398" x2="562" y2="398" stroke="#ffffff"/>
<line x1="524" y1="400" x2="562" y2="400" stroke="#ffffff"/>
<line x1="522" y1="398" x2="564" y2="398" stroke="#ffff00" stroke-dasharray="4 2"/>
<rect x="509" y="391" width="4" height="13" stroke="#ffff00" fill="none"/>
<rect x="576" y="391" width="4" height="13" stroke="#ffff00" fill="none"/>
<line x1="509" y1="372" x2="513" y2="372" stroke="#ffff00"/>
<line x1="509" y1="365" x2="509" y2="372" stroke="#ffff00"/>
<line x1="579" y1="365" x2="579" y2="372" stroke="#ffff00"/>
<line x1="508" y1="394" x2="522" y2="394" stroke="#00ffff"/>
<line x1="563" y1="394" x2="581" y2="394" stroke="#00ffff"/>
<line x1="508" y1="401" x2="522" y2="401" stroke="#00ffff"/>
<line x1="563" y1="401" x2="581" y2="401" stroke="#00ffff"/>
<circle cx="519" cy="398" r="4" stroke="#ffffff" fill="none"/>
<circle cx="567" cy="398" r="4" stroke="#ffffff" fill="none"/>
<circle cx="519" cy="401" r="2" stroke="#00ffff" fill="none"/>
<circle cx="567" cy="401" r="2" stroke="#00ffff" fill="none"/>
<line x1="516" y1="392" x2="516" y2="405" stroke="#ffffff"/>
<line x1="570" y1="392" x2="570" y2="405" stroke="#ffffff"/>
<line x1="464" y1="338" x2="464" y2="453" stroke="#ff0000"/>
<line x1="616" y1="338" x2="616" y2="453" stroke="#ff0000"/>
<line x1="496" y1="406" x2="496" y2="425" stroke="#ff0000"/>
<line x1="591" y1="406" x2="591" y2="425" stroke="#ff0000"/>
<line x1="496" y1="422" x2="591" y2="422" stroke="#ff0000"/>
<line x1="543" y1="408" x2="543" y2="438" stroke="#ff0000"/>
<line x1="464" y1="436" x2="543" y2="436" stroke="#ff0000"/>
<line x1="464" y1="450" x2="616" y2="450" stroke="#ff0000"/>
<text x="206.5" y="477.2" font-size="9" fill="#00ff00" textLength="11.5" lengthAdjust="spacingAndGlyphs" xml:space="preserve"><tspan font-size="6.5" dy="-1.6">????</tspan></text>
<text x="164.5" y="490.5" font-size="9" fill="#00ff00" textLength="104.5" lengthAdjust="spacingAndGlyphs" xml:space="preserve"><tspan dy="0">1.</tspan><tspan font-size="6.5" dy="-1.6">???????</tspan><tspan dy="1.6">M1 ,</tspan><tspan font-size="6.5" dy="-1.6">??</tspan><tspan dy="1.6">,</tspan><tspan font-size="6.5" dy="-1.6">??</tspan><tspan dy="1.6">,</tspan><tspan font-size="6.5" dy="-1.6">??</tspan><tspan dy="1.6">,11</tspan><tspan font-size="6.5" dy="-1.6">????????</tspan><tspan dy="1.6">M1</tspan><tspan font-size="6.5" dy="-1.6">?????</tspan></text>
<text x="164.5" y="503.0" font-size="9" fill="#00ff00" textLength="46.0" lengthAdjust="spacingAndGlyphs" xml:space="preserve"><tspan dy="0">2.</tspan><tspan font-size="6.5" dy="-1.6">??????</tspan><tspan dy="1.6">,</tspan><tspan font-size="6.5" dy="-1.6">??????</tspan></text>
<text x="685.5" y="141.8" font-size="9" fill="#00ff00" textLength="16.5" lengthAdjust="spacingAndGlyphs" xml:space="preserve"><tspan font-size="6.5" dy="-1.6">??????</tspan></text>
<text x="675" y="152.0" font-size="9" fill="#00ff00" textLength="34" lengthAdjust="spacingAndGlyphs" xml:space="preserve"><tspan dy="0">1.</tspan><tspan font-size="6.5" dy="-1.6">????</tspan><tspan dy="1.6">(L)  800</tspan></text>
<text x="675" y="162.2" font-size="9" fill="#00ff00" textLength="35" lengthAdjust="spacingAndGlyphs" xml:space="preserve"><tspan dy="0">2.</tspan><tspan font-size="6.5" dy="-1.6">????</tspan><tspan dy="1.6">(L)  500</tspan></text>
<text x="675" y="172.8" font-size="9" fill="#00ff00" textLength="37" lengthAdjust="spacingAndGlyphs" xml:space="preserve"><tspan dy="0">3.</tspan><tspan font-size="6.5" dy="-1.6">????</tspan><tspan dy="1.6">(m³/h)  25</tspan></text>
<text x="675" y="182.8" font-size="9" fill="#00ff00" textLength="22" lengthAdjust="spacingAndGlyphs" xml:space="preserve"><tspan dy="0">4.</tspan><tspan font-size="6.5" dy="-1.6">??????</tspan></text>
<text x="676.5" y="193.2" font-size="9" fill="#00ff00" textLength="34.5" lengthAdjust="spacingAndGlyphs" xml:space="preserve"><tspan font-size="6.5" dy="-1.6">????</tspan><tspan dy="1.6">(kW) 18.5</tspan></text>
<text x="676.5" y="203.6" font-size="9" fill="#00ff00" textLength="32.5" lengthAdjust="spacingAndGlyphs" xml:space="preserve"><tspan font-size="6.5" dy="-1.6">????</tspan><tspan dy="1.6">(kW) 5.5</tspan></text>
<text x="676.5" y="214.2" font-size="9" fill="#00ff00" textLength="32.0" lengthAdjust="spacingAndGlyphs" xml:space="preserve"><tspan font-size="6.5" dy="-1.6">????</tspan><tspan dy="1.6">(kW)  1.1</tspan></text>
<text x="676.5" y="224.4" font-size="9" fill="#00ff00" textLength="32.0" lengthAdjust="spacingAndGlyphs" xml:space="preserve"><tspan font-size="6.5" dy="-1.6">????</tspan><tspan dy="1.6">(kW)  1.1</tspan></text>
<text x="675" y="234.6" font-size="9" fill="#00ff00" textLength="46.5" lengthAdjust="spacingAndGlyphs" xml:space="preserve"><tspan dy="0">5.</tspan><tspan font-size="6.5" dy="-1.6">??????</tspan><tspan dy="1.6">(r/min) 16</tspan></text>
<text x="675" y="244.8" font-size="9" fill="#00ff00" textLength="48" lengthAdjust="spacingAndGlyphs" xml:space="preserve"><tspan dy="0">6.</tspan><tspan font-size="6.5" dy="-1.6">?????</tspan><tspan dy="1.6">(r/min)  32.6</tspan></text>
<text x="675" y="255.0" font-size="9" fill="#00ff00" textLength="45.5" lengthAdjust="spacingAndGlyphs" xml:space="preserve"><tspan dy="0">7.</tspan><tspan font-size="6.5" dy="-1.6">????</tspan><tspan dy="1.6">(mm)   1600</tspan></text>
<text x="675" y="265.8" font-size="9" fill="#00ff00" textLength="66" lengthAdjust="spacingAndGlyphs" xml:space="preserve"><tspan dy="0">8.</tspan><tspan font-size="6.5" dy="-1.6">????</tspan><tspan dy="1.6"> </tspan><tspan font-size="6.5" dy="-1.6">??????</tspan><tspan dy="1.6">(mmXmmXmm)</tspan></text>
<text x="676.5" y="276.2" font-size="9" fill="#00ff00" textLength="55.5" lengthAdjust="spacingAndGlyphs" xml:space="preserve"><tspan font-size="6.5" dy="-1.6">????</tspan><tspan dy="1.6"> 4567X3003X5755</tspan></text>
<text x="676.5" y="286.4" font-size="9" fill="#00ff00" textLength="54.5" lengthAdjust="spacingAndGlyphs" xml:space="preserve"><tspan font-size="6.5" dy="-1.6">????</tspan><tspan dy="1.6"> 3000X2485X2761</tspan></text>
<text x="195" y="72.5" font-size="6.4" fill="#00ff00" textLength="3" lengthAdjust="spacingAndGlyphs" font-weight="bold" text-anchor="middle">1</text>
<text x="225" y="72.5" font-size="6.4" fill="#00ff00" textLength="3" lengthAdjust="spacingAndGlyphs" font-weight="bold" text-anchor="middle">2</text>
<text x="287" y="72.5" font-size="6.4" fill="#00ff00" textLength="3" lengthAdjust="spacingAndGlyphs" font-weight="bold" text-anchor="middle">3</text>
<text x="331" y="72.5" font-size="6.4" fill="#00ff00" textLength="3" lengthAdjust="spacingAndGlyphs" font-weight="bold" text-anchor="middle">4</text>
<text x="359" y="72.5" font-size="6.4" fill="#00ff00" textLength="3" lengthAdjust="spacingAndGlyphs" font-weight="bold" text-anchor="middle">7</text>
<text x="376" y="72.5" font-size="6.4" fill="#00ff00" textLength="3" lengthAdjust="spacingAndGlyphs" font-weight="bold" text-anchor="middle">8</text>
<text x="407" y="72.5" font-size="6.4" fill="#00ff00" textLength="3" lengthAdjust="spacingAndGlyphs" font-weight="bold" text-anchor="middle">5</text>
<text x="440" y="72.5" font-size="6.4" fill="#00ff00" textLength="3" lengthAdjust="spacingAndGlyphs" font-weight="bold" text-anchor="middle">6</text>
<text x="484" y="72.5" font-size="6.4" fill="#00ff00" textLength="4.5" lengthAdjust="spacingAndGlyphs" font-weight="bold" text-anchor="middle">11</text>
<text x="592" y="72.5" font-size="6.4" fill="#00ff00" textLength="4.5" lengthAdjust="spacingAndGlyphs" font-weight="bold" text-anchor="middle">10</text>
<text x="604.5" y="72.5" font-size="6.4" fill="#00ff00" textLength="4.5" lengthAdjust="spacingAndGlyphs" font-weight="bold" text-anchor="middle">12</text>
<text x="615.5" y="72.5" font-size="6.4" fill="#00ff00" textLength="3" lengthAdjust="spacingAndGlyphs" font-weight="bold" text-anchor="middle">9</text>
<text x="623" y="72.5" font-size="6.4" fill="#00ff00" textLength="3" lengthAdjust="spacingAndGlyphs" font-weight="bold" text-anchor="middle">0</text>
<text x="646.5" y="72.5" font-size="6.4" fill="#00ff00" textLength="3" lengthAdjust="spacingAndGlyphs" font-weight="bold" text-anchor="middle">?</text>
<text x="203" y="103" font-size="6" font-weight="bold" fill="#00ff00" text-anchor="middle" textLength="6" lengthAdjust="spacingAndGlyphs">2430</text>
<text x="215" y="266" font-size="6" font-weight="bold" fill="#00ff00" text-anchor="middle" textLength="6" lengthAdjust="spacingAndGlyphs">800</text>
<text x="199" y="351" font-size="6" font-weight="bold" fill="#00ff00" text-anchor="middle" textLength="6" lengthAdjust="spacingAndGlyphs">1540</text>
<text x="281" y="429" font-size="6" font-weight="bold" fill="#00ff00" text-anchor="middle" textLength="6" lengthAdjust="spacingAndGlyphs">4567</text>
<text x="274" y="446" font-size="6" font-weight="bold" fill="#00ff00" text-anchor="middle" textLength="6" lengthAdjust="spacingAndGlyphs">4841</text>
<text x="379" y="418" font-size="6" font-weight="bold" fill="#00ff00" text-anchor="middle" textLength="6" lengthAdjust="spacingAndGlyphs">1050</text>
<text x="328" y="397" font-size="6" font-weight="bold" fill="#00ff00" text-anchor="middle" textLength="7" lengthAdjust="spacingAndGlyphs">60°</text>
<text x="420" y="375" font-size="6" font-weight="bold" fill="#00ff00" text-anchor="middle" textLength="5" lengthAdjust="spacingAndGlyphs" transform="rotate(-90 420 375)">1200</text>
<text x="99" y="206" font-size="6" font-weight="bold" fill="#00ff00" text-anchor="middle" textLength="6" lengthAdjust="spacingAndGlyphs" transform="rotate(-90 99 206)">5755</text>
<text x="111" y="181" font-size="6" font-weight="bold" fill="#00ff00" text-anchor="middle" textLength="6" lengthAdjust="spacingAndGlyphs" transform="rotate(-90 111 181)">2610</text>
<text x="124" y="206" font-size="6" font-weight="bold" fill="#00ff00" text-anchor="middle" textLength="5" lengthAdjust="spacingAndGlyphs" transform="rotate(-90 124 206)">1020</text>
<text x="123" y="241" font-size="6" font-weight="bold" fill="#00ff00" text-anchor="middle" textLength="5" lengthAdjust="spacingAndGlyphs">200</text>
<text x="124" y="291" font-size="6" font-weight="bold" fill="#00ff00" text-anchor="middle" textLength="6" lengthAdjust="spacingAndGlyphs" transform="rotate(-90 124 291)">1710</text>
<text x="547" y="56" font-size="6" font-weight="bold" fill="#00ff00" text-anchor="middle" textLength="6" lengthAdjust="spacingAndGlyphs">250</text>
<text x="541" y="64.5" font-size="6" font-weight="bold" fill="#00ff00" text-anchor="middle" textLength="6" lengthAdjust="spacingAndGlyphs">250</text>
<text x="547" y="168" font-size="6" font-weight="bold" fill="#00ff00" text-anchor="middle" textLength="6" lengthAdjust="spacingAndGlyphs">3003</text>
<text x="537" y="421" font-size="6" font-weight="bold" fill="#00ff00" text-anchor="middle" textLength="6" lengthAdjust="spacingAndGlyphs">1700</text>
<text x="504" y="435" font-size="6" font-weight="bold" fill="#00ff00" text-anchor="middle" textLength="8" lengthAdjust="spacingAndGlyphs">1400</text>
<text x="544" y="449" font-size="6" font-weight="bold" fill="#00ff00" text-anchor="middle" textLength="8" lengthAdjust="spacingAndGlyphs">2761</text>
<g stroke-width="0.9">
<text x="640.7" y="392.0" font-size="6.8" fill="#00ff00" textLength="4.5" lengthAdjust="spacingAndGlyphs" font-weight="bold" text-anchor="middle">14</text>
<text x="648.3" y="392.0" font-size="6.8" fill="#00ff00" textLength="26" lengthAdjust="spacingAndGlyphs" font-weight="bold">GA.140000 00</text>
</g>
<text x="685" y="392.0" font-size="6.5" fill="#00ff00" textLength="8.0" lengthAdjust="spacingAndGlyphs">????</text>
<text x="722" y="392.0" font-size="6.5" fill="#00ff00" textLength="2" lengthAdjust="spacingAndGlyphs" font-weight="bold" text-anchor="middle">1</text>
<g stroke-width="0.9">
<text x="640.7" y="398.0" font-size="6.8" fill="#00ff00" textLength="4.5" lengthAdjust="spacingAndGlyphs" font-weight="bold" text-anchor="middle">13</text>
<text x="648.3" y="398.0" font-size="6.8" fill="#00ff00" textLength="26" lengthAdjust="spacingAndGlyphs" font-weight="bold">GA.130000 00</text>
</g>
<text x="685" y="398.0" font-size="6.5" fill="#00ff00" textLength="8.0" lengthAdjust="spacingAndGlyphs">????</text>
<text x="722" y="398.0" font-size="6.5" fill="#00ff00" textLength="2" lengthAdjust="spacingAndGlyphs" font-weight="bold" text-anchor="middle">1</text>
<g stroke-width="0.9">
<text x="640.7" y="404.0" font-size="6.8" fill="#00ff00" textLength="4.5" lengthAdjust="spacingAndGlyphs" font-weight="bold" text-anchor="middle">12</text>
<text x="648.3" y="404.0" font-size="6.8" fill="#00ff00" textLength="26" lengthAdjust="spacingAndGlyphs" font-weight="bold">GA.120000 00</text>
</g>
<text x="685" y="404.0" font-size="6.5" fill="#00ff00" textLength="8.0" lengthAdjust="spacingAndGlyphs">????</text>
<text x="722" y="404.0" font-size="6.5" fill="#00ff00" textLength="2" lengthAdjust="spacingAndGlyphs" font-weight="bold" text-anchor="middle">1</text>
<g stroke-width="0.9">
<text x="640.7" y="410.0" font-size="6.8" fill="#00ff00" textLength="4.5" lengthAdjust="spacingAndGlyphs" font-weight="bold" text-anchor="middle">11</text>
<text x="648.3" y="410.0" font-size="6.8" fill="#00ff00" textLength="26" lengthAdjust="spacingAndGlyphs" font-weight="bold">GA.110000 00</text>
</g>
<text x="685" y="410.0" font-size="6.5" fill="#00ff00" textLength="6.0" lengthAdjust="spacingAndGlyphs">???</text>
<text x="722" y="410.0" font-size="6.5" fill="#00ff00" textLength="2" lengthAdjust="spacingAndGlyphs" font-weight="bold" text-anchor="middle">1</text>
<g stroke-width="0.9">
<text x="640.7" y="417.0" font-size="6.8" fill="#00ff00" textLength="4.5" lengthAdjust="spacingAndGlyphs" font-weight="bold" text-anchor="middle">10</text>
<text x="648.3" y="417.0" font-size="6.8" fill="#00ff00" textLength="23" lengthAdjust="spacingAndGlyphs" font-weight="bold">GA.0000 10</text>
</g>
<text x="685" y="417.0" font-size="6.5" fill="#00ff00" textLength="4.0" lengthAdjust="spacingAndGlyphs">??</text>
<text x="722" y="417.0" font-size="6.5" fill="#00ff00" textLength="2" lengthAdjust="spacingAndGlyphs" font-weight="bold" text-anchor="middle">1</text>
<g stroke-width="0.9">
<text x="640.7" y="423.0" font-size="6.8" fill="#00ff00" textLength="3" lengthAdjust="spacingAndGlyphs" font-weight="bold" text-anchor="middle">9</text>
<text x="648.3" y="423.0" font-size="6.8" fill="#00ff00" textLength="23" lengthAdjust="spacingAndGlyphs" font-weight="bold">GA.0000 09</text>
</g>
<text x="685" y="423.0" font-size="6.5" fill="#00ff00" textLength="4.0" lengthAdjust="spacingAndGlyphs">??</text>
<text x="722" y="423.0" font-size="6.5" fill="#00ff00" textLength="2" lengthAdjust="spacingAndGlyphs" font-weight="bold" text-anchor="middle">1</text>
<g stroke-width="0.9">
<text x="640.7" y="429.0" font-size="6.8" fill="#00ff00" textLength="3" lengthAdjust="spacingAndGlyphs" font-weight="bold" text-anchor="middle">8</text>
<text x="648.3" y="429.0" font-size="6.8" fill="#00ff00" textLength="26" lengthAdjust="spacingAndGlyphs" font-weight="bold">GA.080000 00</text>
</g>
<text x="685" y="429.0" font-size="6.5" fill="#00ff00" textLength="8.0" lengthAdjust="spacingAndGlyphs">????</text>
<text x="722" y="429.0" font-size="6.5" fill="#00ff00" textLength="2" lengthAdjust="spacingAndGlyphs" font-weight="bold" text-anchor="middle">1</text>
<g stroke-width="0.9">
<text x="640.7" y="435.0" font-size="6.8" fill="#00ff00" textLength="3" lengthAdjust="spacingAndGlyphs" font-weight="bold" text-anchor="middle">7</text>
<text x="648.3" y="435.0" font-size="6.8" fill="#00ff00" textLength="26" lengthAdjust="spacingAndGlyphs" font-weight="bold">GA.070000 00</text>
</g>
<text x="685" y="435.0" font-size="6.5" fill="#00ff00" textLength="6.0" lengthAdjust="spacingAndGlyphs">???</text>
<text x="722" y="435.0" font-size="6.5" fill="#00ff00" textLength="2" lengthAdjust="spacingAndGlyphs" font-weight="bold" text-anchor="middle">1</text>
<g stroke-width="0.9">
<text x="640.7" y="441.0" font-size="6.8" fill="#00ff00" textLength="3" lengthAdjust="spacingAndGlyphs" font-weight="bold" text-anchor="middle">6</text>
<text x="648.3" y="441.0" font-size="6.8" fill="#00ff00" textLength="23" lengthAdjust="spacingAndGlyphs" font-weight="bold">GA.0000 06</text>
</g>
<text x="685" y="441.0" font-size="6.5" fill="#00ff00" textLength="4.0" lengthAdjust="spacingAndGlyphs">??</text>
<text x="722" y="441.0" font-size="6.5" fill="#00ff00" textLength="2" lengthAdjust="spacingAndGlyphs" font-weight="bold" text-anchor="middle">1</text>
<g stroke-width="0.9">
<text x="640.7" y="447.0" font-size="6.8" fill="#00ff00" textLength="3" lengthAdjust="spacingAndGlyphs" font-weight="bold" text-anchor="middle">5</text>
<text x="648.3" y="447.0" font-size="6.8" fill="#00ff00" textLength="23" lengthAdjust="spacingAndGlyphs" font-weight="bold">GA.0000 05</text>
</g>
<text x="685" y="447.0" font-size="6.5" fill="#00ff00" textLength="6.0" lengthAdjust="spacingAndGlyphs">???</text>
<text x="722" y="447.0" font-size="6.5" fill="#00ff00" textLength="2" lengthAdjust="spacingAndGlyphs" font-weight="bold" text-anchor="middle">1</text>
<g stroke-width="0.9">
<text x="640.7" y="454.0" font-size="6.8" fill="#00ff00" textLength="3" lengthAdjust="spacingAndGlyphs" font-weight="bold" text-anchor="middle">4</text>
<text x="648.3" y="454.0" font-size="6.8" fill="#00ff00" textLength="26" lengthAdjust="spacingAndGlyphs" font-weight="bold">GA.040000 00</text>
</g>
<text x="685" y="454.0" font-size="6.5" fill="#00ff00" textLength="14.0" lengthAdjust="spacingAndGlyphs">???????</text>
<text x="722" y="454.0" font-size="6.5" fill="#00ff00" textLength="2" lengthAdjust="spacingAndGlyphs" font-weight="bold" text-anchor="middle">1</text>
<g stroke-width="0.9">
<text x="640.7" y="460.0" font-size="6.8" fill="#00ff00" textLength="3" lengthAdjust="spacingAndGlyphs" font-weight="bold" text-anchor="middle">3</text>
<text x="648.3" y="460.0" font-size="6.8" fill="#00ff00" textLength="23" lengthAdjust="spacingAndGlyphs" font-weight="bold">GA.0000 03</text>
</g>
<text x="685" y="460.0" font-size="6.5" fill="#00ff00" textLength="6.0" lengthAdjust="spacingAndGlyphs">???</text>
<text x="722" y="460.0" font-size="6.5" fill="#00ff00" textLength="2" lengthAdjust="spacingAndGlyphs" font-weight="bold" text-anchor="middle">1</text>
<g stroke-width="0.9">
<text x="640.7" y="466.0" font-size="6.8" fill="#00ff00" textLength="3" lengthAdjust="spacingAndGlyphs" font-weight="bold" text-anchor="middle">2</text>
<text x="648.3" y="466.0" font-size="6.8" fill="#00ff00" textLength="26" lengthAdjust="spacingAndGlyphs" font-weight="bold">GA.020000 00</text>
</g>
<text x="685" y="466.0" font-size="6.5" fill="#00ff00" textLength="8.0" lengthAdjust="spacingAndGlyphs">????</text>
<text x="722" y="466.0" font-size="6.5" fill="#00ff00" textLength="2" lengthAdjust="spacingAndGlyphs" font-weight="bold" text-anchor="middle">1</text>
<g stroke-width="0.9">
<text x="640.7" y="472.0" font-size="6.8" fill="#00ff00" textLength="3" lengthAdjust="spacingAndGlyphs" font-weight="bold" text-anchor="middle">1</text>
<text x="648.3" y="472.0" font-size="6.8" fill="#00ff00" textLength="23" lengthAdjust="spacingAndGlyphs" font-weight="bold">GA.0000 01</text>
</g>
<text x="685" y="472.0" font-size="6.5" fill="#00ff00" textLength="6.0" lengthAdjust="spacingAndGlyphs">???</text>
<text x="722" y="472.0" font-size="6.5" fill="#00ff00" textLength="2" lengthAdjust="spacingAndGlyphs" font-weight="bold" text-anchor="middle">1</text>
<line x1="636" y1="386" x2="795" y2="386" stroke="#ff0000"/>
<line x1="636" y1="392" x2="795" y2="392" stroke="#ff0000"/>
<line x1="636" y1="398" x2="795" y2="398" stroke="#ff0000"/>
<line x1="636" y1="404" x2="795" y2="404" stroke="#ff0000"/>
<line x1="636" y1="411" x2="795" y2="411" stroke="#ff0000"/>
<line x1="636" y1="417" x2="795" y2="417" stroke="#ff0000"/>
<line x1="636" y1="423" x2="795" y2="423" stroke="#ff0000"/>
<line x1="636" y1="429" x2="795" y2="429" stroke="#ff0000"/>
<line x1="636" y1="435" x2="795" y2="435" stroke="#ff0000"/>
<line x1="636" y1="441" x2="795" y2="441" stroke="#ff0000"/>
<line x1="636" y1="448" x2="795" y2="448" stroke="#ff0000"/>
<line x1="636" y1="454" x2="795" y2="454" stroke="#ff0000"/>
<line x1="636" y1="460" x2="795" y2="460" stroke="#ff0000"/>
<line x1="636" y1="466" x2="795" y2="466" stroke="#ff0000"/>
<line x1="636" y1="386" x2="636" y2="485" stroke="#ffffff"/>
<line x1="645" y1="386" x2="645" y2="485" stroke="#ffffff"/>
<line x1="682" y1="386" x2="682" y2="485" stroke="#ffffff"/>
<line x1="717" y1="386" x2="717" y2="485" stroke="#ffffff"/>
<line x1="726" y1="386" x2="726" y2="485" stroke="#ffffff"/>
<line x1="750" y1="386" x2="750" y2="485" stroke="#ffffff"/>
<line x1="765" y1="386" x2="765" y2="479" stroke="#ffffff"/>
<line x1="780" y1="386" x2="780" y2="485" stroke="#ffffff"/>
<line x1="636" y1="472" x2="795" y2="472" stroke="#ffffff"/>
<line x1="636" y1="485" x2="795" y2="485" stroke="#ffffff"/>
<line x1="750" y1="479" x2="780" y2="479" stroke="#ffffff"/>
<text x="638" y="481.5" font-size="6" fill="#00ff00" textLength="5" lengthAdjust="spacingAndGlyphs" font-weight="bold">??</text>
<text x="650" y="481.5" font-size="6" fill="#00ff00">?</text>
<text x="661" y="481.5" font-size="6" fill="#00ff00">?</text>
<text x="687" y="481.5" font-size="6" fill="#00ff00">?</text>
<text x="697" y="481.5" font-size="6" fill="#00ff00">?</text>
<text x="718" y="481.5" font-size="6" fill="#00ff00" textLength="4" lengthAdjust="spacingAndGlyphs">??</text>
<text x="730" y="481.5" font-size="6" fill="#00ff00">?</text>
<text x="736" y="481.5" font-size="6" fill="#00ff00">?</text>
<text x="754" y="478" font-size="5" fill="#00ff00" textLength="6" lengthAdjust="spacingAndGlyphs">??</text>
<text x="768" y="478" font-size="5" fill="#00ff00" textLength="6" lengthAdjust="spacingAndGlyphs">??</text>
<text x="757" y="484" font-size="5" fill="#00ff00" textLength="8" lengthAdjust="spacingAndGlyphs">? ?</text>
<text x="783" y="481.5" font-size="6" fill="#00ff00" textLength="7" lengthAdjust="spacingAndGlyphs">? ?</text>
<line x1="636" y1="486" x2="795" y2="486" stroke="#ffffff"/>
<line x1="636" y1="486" x2="636" y2="534" stroke="#ffffff"/>
<line x1="707" y1="486" x2="707" y2="534" stroke="#ffffff"/>
<line x1="751" y1="486" x2="751" y2="534" stroke="#ffffff"/>
<line x1="636" y1="491" x2="707" y2="491" stroke="#ff0000"/>
<line x1="636" y1="497" x2="707" y2="497" stroke="#ff0000"/>
<line x1="636" y1="503" x2="707" y2="503" stroke="#ffffff"/>
<line x1="636" y1="509" x2="751" y2="509" stroke="#ffffff"/>
<line x1="636" y1="515" x2="707" y2="515" stroke="#ffffff"/>
<text x="638" y="507.5" font-size="5" fill="#00ff00" textLength="4" lengthAdjust="spacingAndGlyphs">??</text>
<text x="647" y="507.5" font-size="5" fill="#00ff00" textLength="5" lengthAdjust="spacingAndGlyphs">??</text>
<text x="657" y="507.5" font-size="5" fill="#00ff00" textLength="7" lengthAdjust="spacingAndGlyphs">???</text>
<text x="670" y="507.5" font-size="5" fill="#00ff00" textLength="9" lengthAdjust="spacingAndGlyphs">????</text>
<text x="684" y="507.5" font-size="5" fill="#00ff00" textLength="5" lengthAdjust="spacingAndGlyphs">??</text>
<text x="695" y="507.5" font-size="5" fill="#00ff00" textLength="8" lengthAdjust="spacingAndGlyphs">???</text>
<text x="638" y="513.5" font-size="5" fill="#00ff00" textLength="5" lengthAdjust="spacingAndGlyphs">??</text>
<text x="674" y="513.5" font-size="5" fill="#00ff00" textLength="6" lengthAdjust="spacingAndGlyphs">???</text>
<text x="638" y="526.5" font-size="5" fill="#00ff00" textLength="5" lengthAdjust="spacingAndGlyphs">??</text>
<text x="638" y="532.5" font-size="5" fill="#00ff00" textLength="5" lengthAdjust="spacingAndGlyphs">??</text>
<text x="674" y="532.5" font-size="5" fill="#00ff00" textLength="5" lengthAdjust="spacingAndGlyphs">??</text>
<line x1="636" y1="522" x2="707" y2="522" stroke="#ff0000"/>
<line x1="636" y1="528" x2="707" y2="528" stroke="#ff0000"/>
<line x1="645" y1="486" x2="645" y2="509" stroke="#ffffff"/>
<line x1="654" y1="486" x2="654" y2="509" stroke="#ffffff"/>
<line x1="668" y1="486" x2="668" y2="509" stroke="#ffffff"/>
<line x1="682" y1="486" x2="682" y2="509" stroke="#ffffff"/>
<line x1="693" y1="486" x2="693" y2="509" stroke="#ffffff"/>
<line x1="647" y1="509" x2="647" y2="534" stroke="#ffffff"/>
<line x1="658" y1="509" x2="658" y2="534" stroke="#ffffff"/>
<line x1="672" y1="509" x2="672" y2="534" stroke="#ffffff"/>
<line x1="682" y1="509" x2="682" y2="534" stroke="#ffffff"/>
<line x1="707" y1="518" x2="751" y2="518" stroke="#ffffff"/>
<line x1="707" y1="526" x2="751" y2="526" stroke="#ffffff"/>
<line x1="730" y1="509" x2="730" y2="526" stroke="#ffffff"/>
<line x1="741" y1="509" x2="741" y2="526" stroke="#ffffff"/>
<line x1="713" y1="519" x2="713" y2="526" stroke="#ff0000"/>
<line x1="719" y1="519" x2="719" y2="526" stroke="#ff0000"/>
<line x1="724" y1="519" x2="724" y2="526" stroke="#ff0000"/>
<line x1="751" y1="500" x2="795" y2="500" stroke="#ffffff"/>
<line x1="751" y1="518" x2="795" y2="518" stroke="#ffffff"/>
<text x="754.5" y="513" font-size="9.5" fill="#00ff00" textLength="32" lengthAdjust="spacingAndGlyphs">JS500?????</text>
<text x="755" y="529.7" font-size="9.5" fill="#00ff00" textLength="37.3" lengthAdjust="spacingAndGlyphs" font-weight="bold">GA.000000 00</text>
<text x="712" y="515.5" font-size="5.5" fill="#00ff00" textLength="11" lengthAdjust="spacingAndGlyphs">????</text>
<text x="733" y="515.5" font-size="5" fill="#00ff00" textLength="5" lengthAdjust="spacingAndGlyphs">??</text>
<text x="743.5" y="515.5" font-size="5" fill="#00ff00" textLength="5" lengthAdjust="spacingAndGlyphs">??</text>
<text x="743.5" y="524" font-size="5.5" fill="#00ff00" textLength="6" lengthAdjust="spacingAndGlyphs" font-weight="bold">1:5</text>
<text x="710" y="532" font-size="5" fill="#00ff00" textLength="10" lengthAdjust="spacingAndGlyphs">? ?</text>
<text x="733" y="532" font-size="5" fill="#00ff00" textLength="9" lengthAdjust="spacingAndGlyphs">? ?</text>
</g>
</svg>
</body></html>
